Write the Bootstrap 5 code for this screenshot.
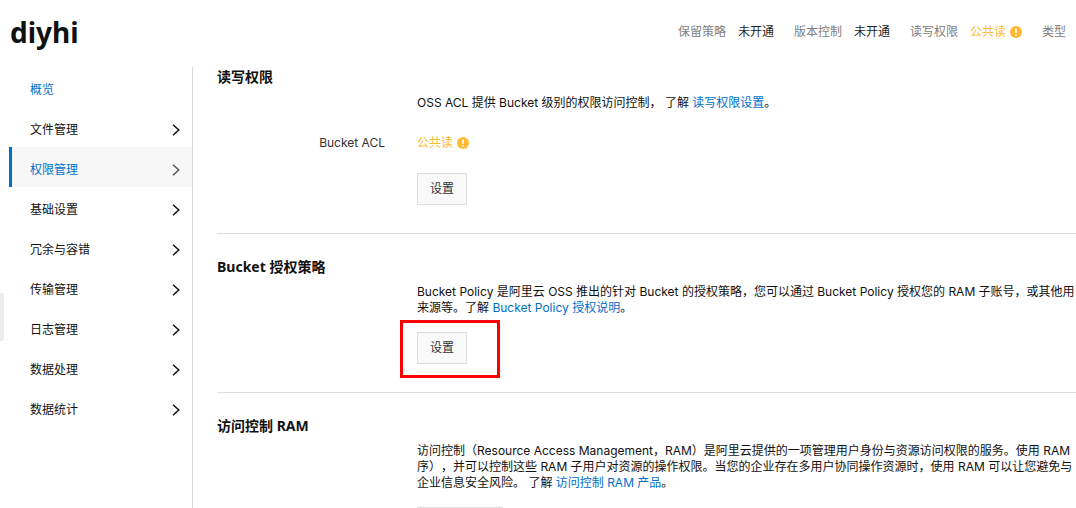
<!DOCTYPE html>
<html lang="zh-CN">
<head>
<meta charset="utf-8">
<meta name="viewport" content="width=device-width, initial-scale=1">
<title>diyhi - 权限管理</title>
<link href="https://cdn.jsdelivr.net/npm/bootstrap@5.3.0/dist/css/bootstrap.min.css" rel="stylesheet">
<style>
body { font-family: Inter, "Noto Sans CJK SC", sans-serif; font-size: 12px; line-height: 16px; color: #111; background: #fff; text-spacing-trim: space-all; }
a { color: #0070cc; text-decoration: none; }
h1, h2 { font-family: "Noto Sans", "Noto Sans CJK SC", sans-serif; }
.top-bar { height: 67px; padding: 0 10px 4px; }
.bucket-name { font-size: 28px; line-height: 32px; font-weight: 700; color: #111; }
.props { gap: 20px; color: #808080; }
.props dt { font-weight: 400; }
.props dd { color: #222; }
.props .warn, .warn { color: #ffba33; }
.side { width: 193px; padding-left: 9px; border-right: 1px solid #d9d9d9; }
.side .nav-link { height: 40px; padding: 6px 12px 0 18px; color: #111; border-left: 3px solid transparent; }
.side .nav-link.overview { color: #0070cc; }
.side .nav-link.active { color: #0070cc; background: #f7f7f7; border-left-color: #0070cc; }
.side .nav-link.active svg { color: #555; }
.content-col { padding-left: 24px; min-width: 0; }
.panel { padding: 24px 0 28px; border-bottom: 1px solid #dedede; }
.panel:first-child { padding-top: 0; }
.panel:last-child { border-bottom: 0; }
.panel h2 { font-size: 14px; line-height: 18px; font-weight: 700; margin-bottom: 8px; color: #111; }
.panel:first-child h2 { margin-bottom: 16px; line-height: 20px; margin-bottom: 8px; padding-bottom: 0; }
.field-label { width: 200px; padding-right: 32px; color: #333; }
.acl-value { margin-bottom: 22px; }
.btn-set { --bs-btn-font-size: 12px; --bs-btn-line-height: 16px; --bs-btn-padding-x: 12px; --bs-btn-padding-y: 7px; --bs-btn-border-radius: 0; --bs-btn-color: #333; --bs-btn-bg: #f9f9f9; --bs-btn-border-color: #dedede; --bs-btn-hover-bg: #eee; --bs-btn-hover-border-color: #ccc; }
.btn-console { width: 86px; height: 32px; }
.marker { inset: -12px -33px -14px -17px; border: 3px solid #f00; pointer-events: none; }
.handle { left: 0; top: 293px; width: 4px; height: 48px; padding: 0; border: 0; background: #ebebeb; border-radius: 0 3px 3px 0; }
</style>
</head>
<body class="vh-100 overflow-hidden d-flex flex-column position-relative">
<svg class="d-none" aria-hidden="true">
  <symbol id="chev" viewBox="0 0 8 12"><path d="M1 .8 6.8 6 1 11.2" fill="none" stroke="currentColor" stroke-width="1.5"/></symbol>
  <symbol id="alert" viewBox="0 0 12 12"><circle cx="6" cy="6" r="6" fill="#ffba33"/><path d="M5.1 2.4h1.8L6.6 7H5.4z" fill="#fff"/><circle cx="6" cy="8.8" r=".9" fill="#fff"/></symbol>
</svg>

<header class="top-bar d-flex align-items-center justify-content-between flex-shrink-0">
  <h1 class="bucket-name mb-0">diyhi</h1>
  <div class="props d-flex text-nowrap">
    <dl class="d-flex mb-0"><dt class="me-2 pe-1">保留策略</dt><dd class="mb-0">未开通</dd></dl>
    <dl class="d-flex mb-0"><dt class="me-2 pe-1">版本控制</dt><dd class="mb-0">未开通</dd></dl>
    <dl class="d-flex mb-0"><dt class="me-2 pe-1">读写权限</dt><dd class="warn mb-0 d-flex align-items-center gap-1">公共读<svg width="12" height="12"><use href="#alert"/></svg></dd></dl>
    <dl class="d-flex mb-0"><dt>类型</dt></dl>
  </div>
</header>

<div class="d-flex flex-grow-1 overflow-hidden">
  <nav class="side nav flex-column flex-nowrap flex-shrink-0" aria-label="Bucket">
    <a class="nav-link overview d-flex align-items-center" href="#">概览</a>
    <a class="nav-link d-flex align-items-center justify-content-between" href="#">文件管理<svg width="8" height="12"><use href="#chev"/></svg></a>
    <a class="nav-link active d-flex align-items-center justify-content-between" href="#" aria-current="page">权限管理<svg width="8" height="12"><use href="#chev"/></svg></a>
    <a class="nav-link d-flex align-items-center justify-content-between" href="#">基础设置<svg width="8" height="12"><use href="#chev"/></svg></a>
    <a class="nav-link d-flex align-items-center justify-content-between" href="#">冗余与容错<svg width="8" height="12"><use href="#chev"/></svg></a>
    <a class="nav-link d-flex align-items-center justify-content-between" href="#">传输管理<svg width="8" height="12"><use href="#chev"/></svg></a>
    <a class="nav-link d-flex align-items-center justify-content-between" href="#">日志管理<svg width="8" height="12"><use href="#chev"/></svg></a>
    <a class="nav-link d-flex align-items-center justify-content-between" href="#">数据处理<svg width="8" height="12"><use href="#chev"/></svg></a>
    <a class="nav-link d-flex align-items-center justify-content-between" href="#">数据统计<svg width="8" height="12"><use href="#chev"/></svg></a>
  </nav>

  <main class="content-col flex-grow-1 text-nowrap">
    <section class="panel">
      <h2>读写权限</h2>
      <div class="d-flex"><div class="field-label flex-shrink-0"></div><p class="mb-4">OSS ACL 提供 Bucket 级别的权限访问控制， 了解 <a href="#">读写权限设置</a>。</p></div>
      <div class="d-flex"><div class="field-label flex-shrink-0 text-end">Bucket ACL</div><div class="warn acl-value d-flex align-items-center gap-1">公共读<svg width="12" height="12"><use href="#alert"/></svg></div></div>
      <div class="d-flex"><div class="field-label flex-shrink-0"></div><button type="button" class="btn btn-set">设置</button></div>
    </section>

    <section class="panel">
      <h2>Bucket 授权策略</h2>
      <div class="d-flex"><div class="field-label flex-shrink-0"></div>
        <div>
          <p class="mb-3">Bucket Policy 是阿里云 OSS 推出的针对 Bucket 的授权策略，您可以通过 Bucket Policy 授权您的 RAM 子账号，或其他用<br>来源等。了解 <a href="#">Bucket Policy 授权说明</a>。</p>
          <div class="d-inline-block position-relative"><button type="button" class="btn btn-set">设置</button><span class="marker position-absolute"></span></div>
        </div>
      </div>
    </section>

    <section class="panel">
      <h2>访问控制 RAM</h2>
      <div class="d-flex"><div class="field-label flex-shrink-0"></div>
        <div>
          <p class="mb-3">访问控制（Resource Access Management，RAM）是阿里云提供的一项管理用户身份与资源访问权限的服务。使用 RAM<br>序），并可以控制这些 RAM 子用户对资源的操作权限。当您的企业存在多用户协同操作资源时，使用 RAM 可以让您避免与<br>企业信息安全风险。 了解 <a href="#">访问控制 RAM 产品</a>。</p>
          <button type="button" class="btn btn-set btn-console" aria-label="RAM"></button>
        </div>
      </div>
    </section>
  </main>
</div>
<button type="button" class="handle position-absolute" aria-label="展开"></button>
<script src="https://cdn.jsdelivr.net/npm/bootstrap@5.3.0/dist/js/bootstrap.bundle.min.js"></script>
</body>
</html>
